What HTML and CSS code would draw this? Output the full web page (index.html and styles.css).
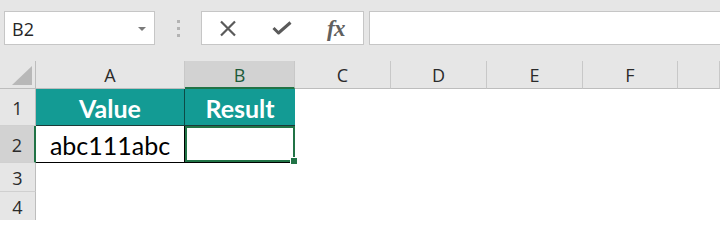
FILE: index.html
```html
<!DOCTYPE html>
<html>
<head>
<meta charset="utf-8">
<link rel="stylesheet" href="styles.css">
</head>
<body>
<div class="app">
  <div class="toolbar">
    <div class="namebox">
      <span class="ref">B2</span>
      <span class="caret"></span>
    </div>
    <div class="grip"><i></i><i></i><i></i></div>
    <div class="btnbox">
      <span class="slot">
        <svg width="18" height="17" viewBox="0 0 18 17"><path d="M2 1.5 L16 15.5 M16 1.5 L2 15.5" stroke="#5a5a5a" stroke-width="2.2" fill="none"/></svg>
      </span>
      <span class="slot">
        <svg width="20" height="14" viewBox="0 0 20 14"><path d="M1.5 7 L6.5 12 L18.5 1.5" stroke="#5a5a5a" stroke-width="3" fill="none" stroke-linejoin="round"/></svg>
      </span>
      <span class="slot fx">fx</span>
    </div>
    <div class="formula"></div>
  </div>
  <div class="sheet">
    <div class="corner"><span class="tri"></span></div>
    <div class="ch">A</div>
    <div class="ch sel">B</div>
    <div class="ch">C</div>
    <div class="ch">D</div>
    <div class="ch">E</div>
    <div class="ch">F</div>
    <div class="ch">&nbsp;</div>

    <div class="rh">1</div>
    <div class="cell head a1">Value</div>
    <div class="cell head b1">Result</div>
    <div class="cell"></div><div class="cell"></div><div class="cell"></div><div class="cell"></div><div class="cell"></div>

    <div class="rh sel">2</div>
    <div class="cell a2">abc111abc</div>
    <div class="cell b2 active"></div>
    <div class="cell"></div><div class="cell"></div><div class="cell"></div><div class="cell"></div><div class="cell"></div>

    <div class="rh">3</div>
    <div class="cell"></div><div class="cell"></div><div class="cell"></div><div class="cell"></div><div class="cell"></div><div class="cell"></div><div class="cell"></div>

    <div class="rh">4</div>
    <div class="cell"></div><div class="cell"></div><div class="cell"></div><div class="cell"></div><div class="cell"></div><div class="cell"></div><div class="cell"></div>
  </div>
</div>
</body>
</html>
```
FILE: styles.css
```css
* { box-sizing: border-box; }
html, body { margin: 0; padding: 0; }
body { width: 720px; height: 220px; overflow: hidden; background: #fff; font-family: "Open Sans", "Noto Sans", sans-serif; }
.app { width: 720px; height: 220px; overflow: hidden; }

.toolbar {
  height: 61px;
  background: #e6e6e6;
  display: flex;
  align-items: flex-start;
  padding: 11px 0 0 4px;
  width: 730px;
}
.namebox {
  width: 151px; height: 34px;
  background: #fff;
  border: 1px solid #c6c6c6;
  display: flex; align-items: center; justify-content: space-between;
  padding: 0 8px 0 7px;
}
.ref { font-size: 18px; color: #262626; line-height: 1; padding-top: 1px; }
.caret {
  width: 0; height: 0;
  border-left: 4px solid transparent; border-right: 4px solid transparent;
  border-top: 4px solid #7a7a7a;
  margin-top: 1px;
}
.grip {
  width: 46px; height: 34px;
  display: flex; flex-direction: column; align-items: center; justify-content: center; gap: 4px;
}
.grip i { display: block; width: 3px; height: 3px; background: #b3b3b3; }
.btnbox {
  width: 163px; height: 34px;
  background: #fff; border: 1px solid #c6c6c6;
  display: flex; align-items: center;
}
.slot { width: 55px; display: flex; justify-content: center; align-items: center; }
.slot:first-child { margin-left: -1px; }
.fx { font-family: "Liberation Serif", "DejaVu Serif", serif; font-style: italic; font-weight: bold; font-size: 23px; color: #606060; line-height: 1; letter-spacing: -0.5px; }
.formula {
  margin-left: 5px; flex: 1; height: 34px;
  background: #fff; border: 1px solid #c6c6c6;
}

.sheet {
  display: grid;
  grid-template-columns: 36px 149px 110px 96px 96px 96px 95px 42px;
  grid-template-rows: 28px 37px 37px 29px 29px;
  background: #fff;
}
.corner { background: #e6e6e6; border-bottom: 1px solid #bdbdbd; border-right: 1px solid #bdbdbd; position: relative; }
.tri {
  position: absolute; right: 3px; bottom: 3px;
  width: 0; height: 0;
  border-left: 20px solid transparent;
  border-bottom: 19px solid #b8b8b8;
}
.ch {
  background: #e6e6e6;
  border-right: 1px solid #c8c8c8; border-bottom: 1px solid #bdbdbd;
  display: flex; align-items: center; justify-content: center;
  font-size: 18px; color: #2b2b2b; padding-top: 1px;
}
.ch.sel { background: #d2d2d2; color: #1e5b3a; border-bottom: 2px solid #217346; padding-top: 2px; }
.rh {
  background: #e6e6e6;
  border-right: 1px solid #bdbdbd; border-bottom: 1px solid #d0d0d0;
  display: flex; align-items: center; justify-content: center;
  font-size: 18px; color: #2b2b2b; padding-top: 2px;
}
.rh.sel { background: #d2d2d2; border-right: 2px solid #217346; }
.cell { background: #fff; font-family: "Lato", "Open Sans", sans-serif; }
.head {
  background: #139b94; color: #fff; font-weight: bold; font-size: 25px;
  display: flex; align-items: center; justify-content: center;
  padding-top: 2px;
  border-bottom: 1px solid #1b3a38;
}
.a1 { border-right: 1px solid #0d4b47; }
.a2 {
  font-size: 25px; color: #000;
  display: flex; align-items: center; justify-content: center;
  border-right: 1px solid #000; border-bottom: 1px solid #000;
  padding-top: 2px;
}
.b2 { border-bottom: 1px solid #000; position: relative; }
.active { box-shadow: inset 0 0 0 2px #217346; }
.active::after {
  content: ""; position: absolute; right: -3px; bottom: -3px;
  width: 6px; height: 6px; background: #217346; border: 1px solid #fff;
}
```
